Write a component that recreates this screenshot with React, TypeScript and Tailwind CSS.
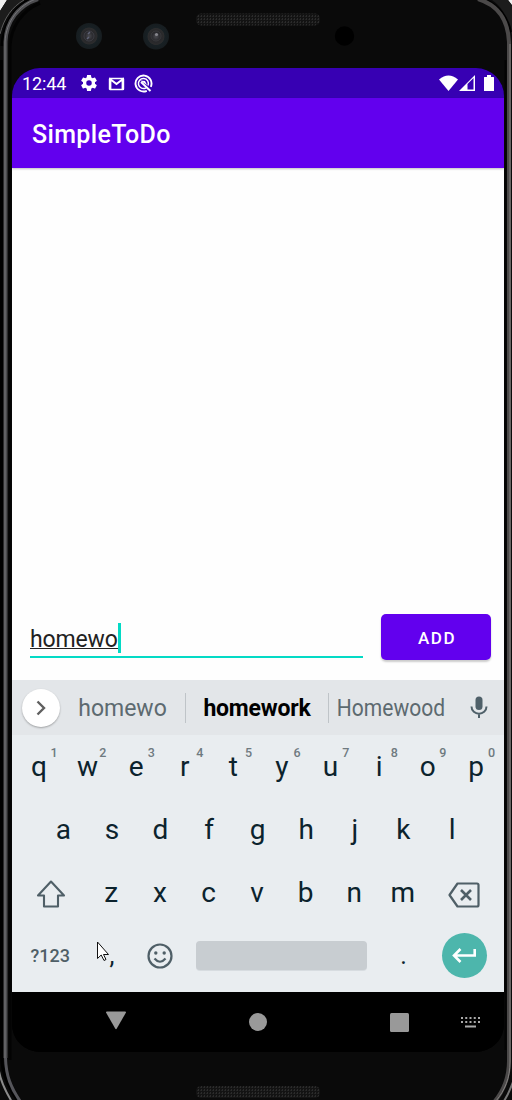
import React from "react";

const topRow = [
  ["q", "1"],
  ["w", "2"],
  ["e", "3"],
  ["r", "4"],
  ["t", "5"],
  ["y", "6"],
  ["u", "7"],
  ["i", "8"],
  ["o", "9"],
  ["p", "0"],
];

function PhoneShell() {
  return (
    <svg className="absolute inset-0" width="512" height="1100" viewBox="0 0 512 1100" fill="none">
      <defs>
        <pattern id="mesh" width="3" height="3" patternUnits="userSpaceOnUse">
          <rect width="3" height="3" fill="#131313" />
          <rect width="1" height="2" fill="#2b2b2b" />
          <rect x="2" y="1" width="1" height="1" fill="#222222" />
        </pattern>
        <radialGradient id="lens">
          <stop offset="0" stopColor="#4a4a50" />
          <stop offset="0.35" stopColor="#26262a" />
          <stop offset="0.62" stopColor="#2c2c2d" />
          <stop offset="0.68" stopColor="#182024" />
          <stop offset="1" stopColor="#171d20" />
        </radialGradient>
      </defs>
      <path d="M0 0H7L0 11ZM512 0H508L512 5Z" fill="#f0f0f0" />
      <path d="M0 11L7 0H24Q6 12 0 34Z" fill="#1c1c1c" />
      <path d="M1.500 60V1055C1.500 1075 10 1090 20 1104" stroke="#000" strokeWidth="3" />
      <path d="M2 46C4 24 15 8 31 -1" stroke="#000" strokeWidth="3.500" />
      <path d="M0 34C4 18 12 7 24 0" stroke="#5c5c5c" strokeWidth="1" />
      <path d="M5.500 1058V42C6 21 19 5 38 -1" stroke="#4c4c4f" strokeWidth="4" />
      <path d="M5 1058V42C6 21 19 5 36 -1" stroke="#77777a" strokeWidth="1" />
      <path d="M5.500 1058C6 1076 11 1088 20 1101" stroke="#55555a" strokeWidth="3" />
      <path d="M-1 1071C1 1083 6 1092 12 1102" stroke="#8b8b8b" strokeWidth="2" />
      <path d="M10 1060V46C11 28 21 11 40 3" stroke="#030303" strokeWidth="3" />
      <path d="M492 0H508L512 6V36C508 18 503 8 492 0Z" fill="#1c1c1c" />
      <path d="M487 0C500 7 508 17 511 32" stroke="#000" strokeWidth="2" />
      <path d="M478 -1C498 5 508 20 509 42V1061C509 1077 504 1090 495 1101" stroke="#4b4949" strokeWidth="4" />
      <path d="M510 44V1062C510 1078 505 1090 496 1101" stroke="#858280" strokeWidth="1" />
      <path d="M513 1082C510 1090 508 1095 504 1101" stroke="#777" strokeWidth="2" />
      <path d="M505.500 60V1050" stroke="#030303" strokeWidth="2" />
      <rect x="196" y="13.500" width="124" height="12" rx="5" fill="url(#mesh)" />
      <rect x="196" y="1086" width="124" height="12" rx="5" fill="url(#mesh)" />
      <circle cx="89" cy="36" r="13" fill="url(#lens)" />
      <circle cx="156" cy="36.500" r="13" fill="url(#lens)" />
      <circle cx="89" cy="36" r="5" stroke="#45454c" strokeWidth="0.800" />
      <circle cx="156" cy="36" r="5" stroke="#3d3d40" strokeWidth="0.800" />
      <path d="M88 34L90 32M87 39L89 37" stroke="#606478" strokeWidth="1.500" />
      <circle cx="156.500" cy="34.500" r="1.600" fill="#85858c" />
      <circle cx="344.500" cy="36" r="9.700" fill="#000" />
    </svg>
  );
}

function StatusBar() {
  return (
    <div className="flex h-[30px] shrink-0 items-center bg-[#3700b3] pl-[10px] text-white">
      <span className="w-[57px] pt-[2px] text-[18px] leading-[30px] tracking-[-0.1px]">12:44</span>
      <svg width="20" height="20" viewBox="0 0 24 24" fill="currentColor">
        <path d="M19.140 12.940c.04-.3.06-.61.06-.94 0-.32-.02-.64-.07-.94l2.030-1.580a.49.49 0 0 0 .12-.61l-1.920-3.320a.488.488 0 0 0-.59-.22l-2.390.96c-.5-.38-1.030-.7-1.620-.94l-.36-2.540a.484.484 0 0 0-.48-.41h-3.840c-.24 0-.43.17-.47.41l-.36 2.540c-.59.24-1.130.57-1.620.94l-2.390-.96c-.22-.08-.47 0-.59.22L2.740 8.870c-.12.21-.08.47.12.61l2.030 1.580c-.05.3-.09.63-.09.94s.02.64.07.94l-2.030 1.580a.49.49 0 0 0-.12.61l1.920 3.320c.12.22.37.29.59.22l2.390-.96c.5.38 1.030.7 1.620.94l.36 2.540c.05.24.24.41.48.41h3.840c.24 0 .44-.17.47-.41l.36-2.540c.59-.24 1.130-.56 1.620-.94l2.390.96c.22.08.47 0 .59-.22l1.920-3.320c.12-.22.07-.47-.12-.61l-2.010-1.580zM12 15.300A3.300 3.300 0 1 1 12 8.700a3.300 3.300 0 0 1 0 6.600z" />
      </svg>
      <svg className="mt-px ml-[9px]" width="17" height="14" viewBox="0 0 17 14" fill="none">
        <rect x="1.500" y="1.500" width="14" height="11" stroke="white" strokeWidth="1.400" rx="0.500" />
        <path d="M2.400 12V2.300L8.500 7L14.600 2.300V12" stroke="white" strokeWidth="2" />
      </svg>
      <svg className="ml-[9px]" width="19" height="19" viewBox="0 0 19 19" fill="none" stroke="white">
        <path d="M12.800 16.800A8 8 0 1 1 16.800 12.800" strokeWidth="1.900" />
        <path d="M12 13.800A5 5 0 1 1 14 11.500" strokeWidth="1.500" />
        <path d="M7 8L16.500 17" strokeWidth="2" />
        <path d="M6 6.500L11 7L13 11Z" fill="white" stroke="none" />
      </svg>
      <svg className="ml-[286px]" width="19" height="16" viewBox="0 0 19 16" fill="white">
        <path d="M0 4.500Q9.500 -3.500 19 4.500L9.500 16Z" />
      </svg>
      <svg className="ml-[1px]" width="16" height="16" viewBox="0 0 16 16">
        <path d="M0 16L16 0V16Z" fill="white" />
        <path d="M8.500 9L14.500 3V14.500H8.500Z" fill="#3700b3" />
      </svg>
      <svg className="ml-[9px]" width="10" height="16" viewBox="0 0 10 16" fill="white">
        <path d="M3 0H7V2H9.500Q10 2 10 2.500V16H0V2.500Q0 2 .5 2H3Z" />
      </svg>
    </div>
  );
}

function Suggestions() {
  return (
    <div className="flex h-[55px] shrink-0 items-center bg-[#e3e6e9] pl-[10px] text-[23px] text-[#5d6a70]">
      <div className="flex size-[38px] shrink-0 items-center justify-center rounded-full bg-white shadow-[0_1px_2px_rgba(0,0,0,0.3)]">
        <svg width="10" height="16" viewBox="0 0 10 16" fill="none" stroke="#606060" strokeWidth="2.400">
          <path d="M1.500 1.500L8 8L1.500 14.500" />
        </svg>
      </div>
      <span className="w-[125px] pt-[3px] text-center">homewo</span>
      <span className="h-[30px] w-px bg-[#bfc4c8]" />
      <span className="w-[142px] pt-[3px] text-center font-bold tracking-[-0.2px] text-black">homework</span>
      <span className="h-[30px] w-px bg-[#bfc4c8]" />
      <span className="w-[124px] scale-x-[0.915] pt-[3px] text-center">Homewood</span>
      <span className="flex w-[51px] justify-center">
        <svg className="-mt-px" width="18" height="24" viewBox="0 0 18 24" fill="none">
          <rect x="5.500" y="1.500" width="7" height="13.500" rx="3.500" fill="#4f6069" />
          <path d="M1.500 11.500C1.500 21 16.500 21 16.500 11.500M9 18.500V23" stroke="#4f6069" strokeWidth="2" />
        </svg>
      </span>
    </div>
  );
}

function Key({ label }: { label: string }) {
  return <span className="w-[48.6px] text-center">{label}</span>;
}

function Keyboard() {
  return (
    <div className="relative flex h-[257px] shrink-0 flex-col bg-[#e9edf0] text-[28px] leading-[63px] text-[#0c232d]">
      <div className="flex h-[63px] pl-[2.6px]">
        {topRow.map(([letter, digit]) => (
          <span key={letter} className="relative w-[48.6px] text-center">
            {letter}
            <sup className="absolute top-[11px] right-[5.5px] text-[12.5px] leading-[14px] font-medium text-[#6f7a80]">{digit}</sup>
          </span>
        ))}
      </div>
      <div className="flex h-[63px] pl-[27px]">
        {"asdfghjkl".split("").map((c) => (
          <Key key={c} label={c} />
        ))}
      </div>
      <div className="flex h-[63px] items-center pl-[24px]">
        <svg className="mt-[2px] mr-[3px] w-[30px]" height="28" viewBox="0 0 30 28" fill="none" stroke="#4f5f67" strokeWidth="2.100" strokeLinejoin="round">
          <path d="M15 1.500L28 15.500H22V26.500H8V15.500H2Z" />
        </svg>
        <span className="w-[18px]" />
        {"zxcvbnm".split("").map((c) => (
          <Key key={c} label={c} />
        ))}
        <svg className="mt-[4px] ml-[21px]" width="32" height="26" viewBox="0 0 32 26" fill="none" stroke="#4f5f67" strokeWidth="2.200" strokeLinejoin="round">
          <path d="M9.500 1.500H29Q30.500 1.500 30.500 3V23Q30.500 24.500 29 24.500H9.500L1.500 13Z" />
          <path d="M13 8L23 18M23 8L13 18" strokeWidth="2.600" />
        </svg>
      </div>
      <div className="flex h-[63px] items-center pl-[18.5px]">
        <span className="w-[41.5px] text-[18px] font-medium text-[#4f5f67]">?123</span>
        <span className="ml-[24px] w-[32px] text-center text-[25px]">,</span>
        <svg className="ml-[19px]" width="26" height="26" viewBox="0 0 26 26" fill="none" stroke="#4f5f67" strokeWidth="2.200">
          <circle cx="13" cy="13" r="11.500" />
          <path d="M7.500 15.500Q13 22 18.500 15.500" />
          <circle cx="8.800" cy="10" r="1.700" fill="#4f5f67" stroke="none" />
          <circle cx="17.200" cy="10" r="1.700" fill="#4f5f67" stroke="none" />
        </svg>
        <span className="ml-[23px] h-[29px] w-[171px] rounded bg-[#c8cdd1] shadow-[0_1px_0_#d7dce0]" />
        <span className="ml-[21px] w-[31px] text-center text-[25px]">.</span>
        <span className="ml-[23px] flex size-[45px] items-center justify-center rounded-full bg-[#4db6ac]">
          <svg className="-ml-[2px]" width="24" height="16" viewBox="0 0 24 16" fill="none" stroke="white" strokeWidth="2.600">
            <path d="M22.700 1V7.500H2M8.500 1L2 7.500L8.500 14" />
          </svg>
        </span>
      </div>
      <svg className="absolute top-[206px] left-[84px]" width="15" height="22" viewBox="0 0 15 22">
        <path d="M1.500 1V17.500L5.200 14L8 19.500L10 18.500L7.500 13.500H12.500Z" fill="white" stroke="#111" strokeWidth="1" />
      </svg>
    </div>
  );
}

function NavBar() {
  return (
    <div className="flex h-[60px] shrink-0 items-center bg-black pl-[93px]">
      <svg className="-mt-[3px]" width="22" height="19" viewBox="0 0 22 19" fill="#999">
        <path d="M2 .5H20Q21.500 .5 20.700 2L11.800 17.500Q11 18.800 10.200 17.500L1.300 2Q.5 .5 2 .5Z" />
      </svg>
      <span className="ml-[122px] size-[18px] rounded-full bg-[#999]" />
      <span className="ml-[123px] size-[19px] rounded-[1.5px] bg-[#999]" />
      <svg className="ml-[52px]" width="19" height="11" viewBox="0 0 19 11" fill="#aaa">
        {[0, 4.25, 8.5, 12.75, 17].map((x) => (
          <g key={x}>
            <rect x={x} y="0" width="2" height="2" />
            <rect x={x} y="4" width="2" height="2" />
          </g>
        ))}
        <rect x="4" y="8.500" width="11" height="2" />
      </svg>
    </div>
  );
}

export default function App() {
  return (
    <div className="relative h-[1100px] w-[512px] overflow-hidden bg-[#0a0a0a] pt-[68px] font-['Roboto',sans-serif]">
      <PhoneShell />
      <main className="relative ml-[12px] flex h-[984px] w-[492px] flex-col overflow-hidden rounded-[28px] bg-black">
        <StatusBar />
        <header className="z-10 flex h-[70px] shrink-0 items-center bg-[#6200ee] pt-[4px] pl-[20px] text-[25px] font-medium tracking-[0.35px] text-white shadow-[0_1px_2px_rgba(0,0,0,0.25)]">
          SimpleToDo
        </header>
        <section className="flex flex-1 flex-col justify-end bg-[#fefefe] pb-[20px] pl-[18px]">
          <div className="flex h-[46px]">
            <div className="flex h-[44px] w-[333px] items-start border-b-2 border-[#03dac5] pt-[9px]">
              <span className="h-[26px] w-[88px] border-b border-[#222] text-[23px] leading-[34px] tracking-[-0.15px] text-[#222]">homewo</span>
              <span className="h-[30px] w-[3px] bg-[#03dac5]" />
            </div>
            <button className="ml-[18px] h-[46px] w-[110px] rounded-[5px] bg-[#6200ee] pt-[3px] pl-[2px] text-[17px] font-medium tracking-[1.5px] text-white shadow-[0_2px_2px_rgba(0,0,0,0.2)]">
              ADD
            </button>
          </div>
        </section>
        <Suggestions />
        <Keyboard />
        <NavBar />
      </main>
    </div>
  );
}
